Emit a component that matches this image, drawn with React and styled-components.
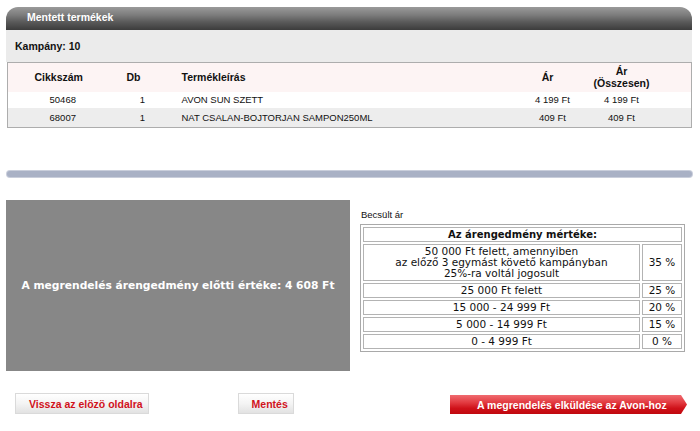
import React from "react";
import styled, { createGlobalStyle } from "styled-components";

const Global = createGlobalStyle`
  html, body { margin: 0; padding: 0; background: #fff; }
  body { font-family: "Liberation Sans", Arial, sans-serif; }
`;

const Page = styled.div`
  width: 700px;
  height: 431px;
  box-sizing: border-box;
  padding: 7px 8px 0 6px;
  overflow: hidden;
`;

const HeaderBar = styled.div`
  height: 23px;
  border-radius: 12px 12px 0 0;
  background: linear-gradient(to bottom, #9a9a9a 0%, #7c7c7c 35%, #5a5a5a 65%, #3c3c3c 100%);
  display: flex;
  align-items: center;
  padding: 0 0 3px 21px;
  box-sizing: border-box;
  color: #fff;
  font: bold 10.5px "Liberation Sans", Arial, sans-serif;
`;

const CampaignBar = styled.div`
  height: 32px;
  background: #ebebeb;
  display: flex;
  align-items: center;
  padding-left: 9px;
  font: bold 10.5px "Liberation Sans", Arial, sans-serif;
  color: #111;
`;

const ItemsTable = styled.table`
  margin-left: 1px;
  width: 685px;
  border-collapse: collapse;
  border: 1px solid #adadad;
  table-layout: fixed;
  font-family: "Liberation Sans", Arial, sans-serif;
  color: #111;
`;

const HeadRow = styled.tr`
  background: #fdf4f4;
  height: 29px;
`;

const BodyRow = styled.tr`
  background: ${(p) => (p.$alt ? "#ededed" : "#fff")};
  height: ${(p) => p.$h}px;
`;

const Th = styled.th`
  font-size: 10.5px;
  font-weight: bold;
  line-height: 12px;
  text-align: ${(p) => p.$align || "center"};
  padding: 0 ${(p) => p.$pr || 0}px 0 ${(p) => p.$pl || 0}px;
  vertical-align: middle;
`;

const Td = styled.td`
  font-size: 9.5px;
  text-align: ${(p) => p.$align || "center"};
  padding: 0 ${(p) => p.$pr || 0}px 0 ${(p) => p.$pl || 0}px;
  vertical-align: middle;
  white-space: nowrap;
`;

const Divider = styled.div`
  margin: 43px 0 0 1px;
  height: 6px;
  border-radius: 4px;
  background: #a9b1c5;
  box-shadow: 0 0 0 1px #c9cedb;
`;

const Summary = styled.div`
  display: flex;
  margin-top: 23px;
`;

const TotalBox = styled.div`
  width: 344px;
  height: 171px;
  background: #878787;
  display: flex;
  align-items: center;
  justify-content: center;
  color: #fff;
  font: bold 10.7px "DejaVu Sans", Verdana, sans-serif;
`;

const DiscountCol = styled.div`
  margin-left: 10px;
  padding-top: 9px;
`;

const Label = styled.div`
  font: 9.5px "Liberation Sans", Arial, sans-serif;
  line-height: 12px;
  padding-left: 1px;
  color: #111;
`;

const DiscountTable = styled.table`
  margin-top: 3px;
  width: 325px;
  border-collapse: separate;
  border-spacing: 2px;
  border: 1px solid #a9a9a9;
  font: 10.5px "DejaVu Sans", Verdana, sans-serif;
  color: #111;
`;

const DCell = styled.td`
  border: 1px solid #b3b3b3;
  text-align: center;
  white-space: nowrap;
  line-height: ${(p) => (p.$multi ? "11px" : "13px")};
  padding: ${(p) => (p.$multi ? "1px 0" : "0")};
  font-weight: ${(p) => (p.$bold ? "bold" : "normal")};
  font-size: ${(p) => (p.$bold ? "10px" : "10.5px")};
  width: ${(p) => (p.$w ? `${p.$w}px` : "auto")};
`;

const Buttons = styled.div`
  display: flex;
  align-items: center;
  margin-top: 22px;
  padding-left: 9px;
`;

const GreyButton = styled.button`
  height: 21px;
  box-sizing: border-box;
  margin-left: ${(p) => p.$ml || 0}px;
  padding: 0 5px 0 13px;
  border: 1px solid #dadada;
  background: linear-gradient(to bottom, #ffffff 0%, #f4f4f4 50%, #e2e2e2 100%);
  color: #d1121c;
  font: bold 10.5px "Liberation Sans", Arial, sans-serif;
  cursor: pointer;
`;

const RedButton = styled.button`
  margin-left: auto;
  margin-right: 5px;
  margin-top: 2px;
  height: 19px;
  width: 237px;
  box-sizing: border-box;
  padding: 0 0 0 27px;
  text-align: left;
  border: none;
  clip-path: polygon(0 0, calc(100% - 6px) 0, 100% 50%, calc(100% - 6px) 100%, 0 100%);
  background: linear-gradient(to bottom, #f06b70 0%, #e23a40 40%, #cf1119 70%, #c0080f 100%);
  color: #fff;
  font: bold 10.5px "Liberation Sans", Arial, sans-serif;
  cursor: pointer;
`;

const items = [
  { code: "50468", qty: "1", name: "AVON SUN SZETT", price: "4 199 Ft", total: "4 199 Ft", h: 16 },
  { code: "68007", qty: "1", name: "NAT CSALAN-BOJTORJAN SAMPON250ML", price: "409 Ft", total: "409 Ft", h: 20 },
];

const tiers = [
  ["25 000 Ft felett", "25 %"],
  ["15 000 - 24 999 Ft", "20 %"],
  ["5 000 - 14 999 Ft", "15 %"],
  ["0 - 4 999 Ft", "0 %"],
];

export default function App() {
  return (
    <>
      <Global />
      <Page>
        <HeaderBar>Mentett termékek</HeaderBar>
        <CampaignBar>Kampány: 10</CampaignBar>
        <ItemsTable>
          <colgroup>
            <col style={{ width: 102 }} />
            <col style={{ width: 66 }} />
            <col style={{ width: 340 }} />
            <col style={{ width: 72 }} />
            <col style={{ width: 68 }} />
            <col />
          </colgroup>
          <thead>
            <HeadRow>
              <Th>Cikkszám</Th>
              <Th $pr={18}>Db</Th>
              <Th $align="left" $pl={6}>Termékleírás</Th>
              <Th $pr={8}>Ár</Th>
              <Th>
                Ár
                <br />
                (Összesen)
              </Th>
              <Th />
            </HeadRow>
          </thead>
          <tbody>
            {items.map((it, i) => (
              <BodyRow key={it.code} $alt={i % 2 === 1} $h={it.h}>
                <Td $pl={8}>{it.code}</Td>
                <Td>{it.qty}</Td>
                <Td $align="left" $pl={6}>{it.name}</Td>
                <Td $pl={2}>{it.price}</Td>
                <Td>{it.total}</Td>
                <Td />
              </BodyRow>
            ))}
          </tbody>
        </ItemsTable>
        <Divider />
        <Summary>
          <TotalBox>A megrendelés árengedmény előtti értéke: 4 608 Ft</TotalBox>
          <DiscountCol>
            <Label>Becsült ár</Label>
            <DiscountTable>
              <tbody>
                <tr>
                  <DCell colSpan={2} $bold>
                    Az árengedmény mértéke:
                  </DCell>
                </tr>
                <tr>
                  <DCell $multi>
                    50 000 Ft felett, amennyiben
                    <br />
                    az előző 3 egymást követő kampányban
                    <br />
                    25%-ra voltál jogosult
                  </DCell>
                  <DCell $w={38}>35 %</DCell>
                </tr>
                {tiers.map(([range, pct]) => (
                  <tr key={range}>
                    <DCell>{range}</DCell>
                    <DCell $w={38}>{pct}</DCell>
                  </tr>
                ))}
              </tbody>
            </DiscountTable>
          </DiscountCol>
        </Summary>
        <Buttons>
          <GreyButton>Vissza az elözö oldalra</GreyButton>
          <GreyButton $ml={89}>Mentés</GreyButton>
          <RedButton>A megrendelés elküldése az Avon-hoz</RedButton>
        </Buttons>
      </Page>
    </>
  );
}
